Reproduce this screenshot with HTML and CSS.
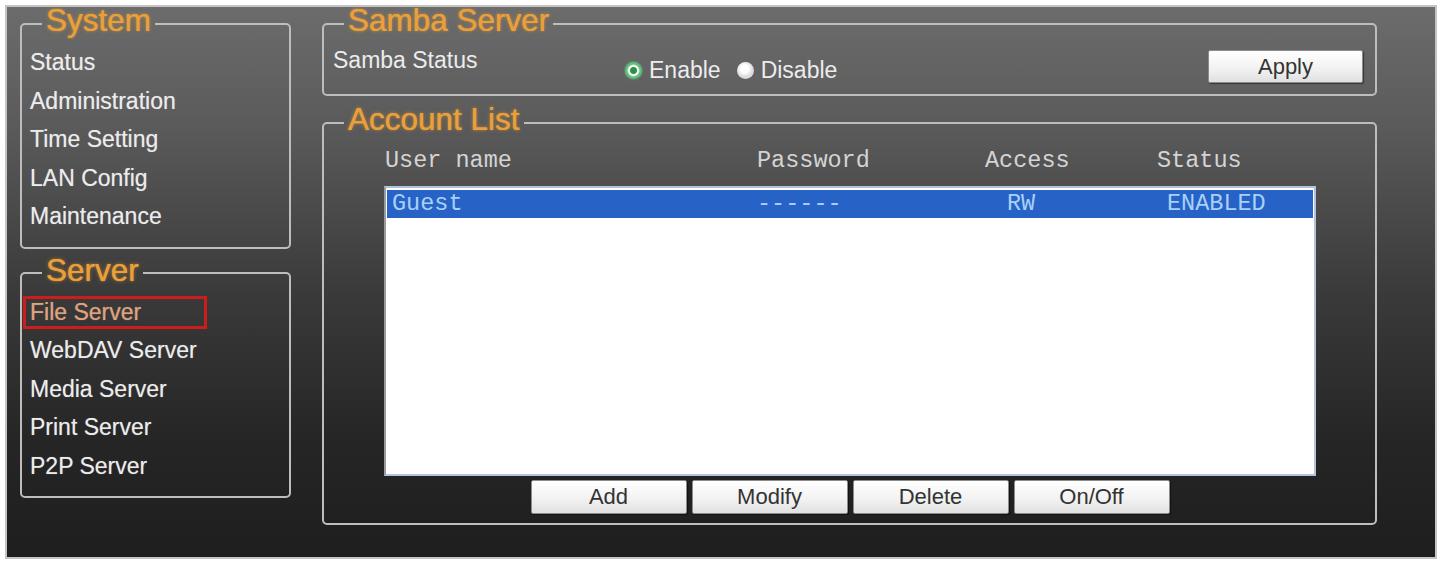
FILE: index.html
```html
<!DOCTYPE html>
<html lang="en">
<head>
    <meta charset="UTF-8">
    <title>File Server</title>
    <link rel="stylesheet" href="styles.css">
</head>
<body>
<div class="frame">
    <div class="sidebar">
        <fieldset class="group">
            <legend>System</legend>
            <a href="#">Status</a>
            <a href="#">Administration</a>
            <a href="#">Time Setting</a>
            <a href="#">LAN Config</a>
            <a href="#">Maintenance</a>
        </fieldset>
        <fieldset class="group server">
            <legend>Server</legend>
            <a href="#" class="active">File Server</a>
            <a href="#">WebDAV Server</a>
            <a href="#">Media Server</a>
            <a href="#">Print Server</a>
            <a href="#">P2P Server</a>
        </fieldset>
    </div>

    <div class="main">
        <fieldset class="samba">
            <legend>Samba Server</legend>
            <span class="samba-label">Samba Status</span>
            <div class="radios">
                <span class="radio checked"></span><span class="radio-text">Enable</span>
                <span class="radio off"></span><span class="radio-text">Disable</span>
            </div>
            <button class="btn apply">Apply</button>
        </fieldset>

        <fieldset class="accounts">
            <legend>Account List</legend>
            <div class="list-wrap">
                <div class="list-head">
                    <span>User name</span>
                    <span>Password</span>
                    <span>Access</span>
                    <span>Status</span>
                </div>
                <div class="list-box">
                    <div class="list-row selected">
                        <span>Guest</span>
                        <span>------</span>
                        <span>RW</span>
                        <span>ENABLED</span>
                    </div>
                </div>
                <div class="actions">
                    <button class="btn">Add</button>
                    <button class="btn">Modify</button>
                    <button class="btn">Delete</button>
                    <button class="btn">On/Off</button>
                </div>
            </div>
        </fieldset>
    </div>
</div>
</body>
</html>
```

FILE: styles.css
```css
html, body {
    margin: 0;
    padding: 0;
    background: #ffffff;
    overflow: hidden;
}

body {
    font-family: "Liberation Sans", Arial, sans-serif;
}

.frame {
    margin: 5px;
    height: 554px;
    box-sizing: border-box;
    border: 2px solid #c4c4c4;
    background: linear-gradient(#6c6c6c 0%, #5a5a5a 22%, #3a3a3a 52%, #262626 78%, #1e1e1e 100%);
    display: flex;
    gap: 31px;
    padding-left: 13px;
}

/* fieldsets */
fieldset {
    margin: 0;
    border: 2px solid #bdbdbd;
    border-radius: 5px;
    min-width: 0;
}

legend {
    font-size: 31.5px;
    line-height: 26px;
    padding: 0 4px 7px 4px;
    color: #eaa03a;
    text-shadow: 0 0 1px #eaa03a, 0 0 4px rgba(236, 160, 50, 0.5);
}

/* sidebar */
.sidebar {
    width: 271px;
    flex-shrink: 0;
}

.group {
    padding: 3px 8px 11px 8px;
}

.group legend {
    margin-left: 12px;
}

.server {
    margin-top: 8px;
}

.group a {
    display: block;
    color: #ececec;
    text-decoration: none;
    font-size: 23px;
    line-height: 38.5px;
    text-shadow: 0 0 1px rgba(255, 255, 255, 0.4);
}

.group a.active {
    position: relative;
    color: #e2a177;
}

.group a.active::after {
    content: '';
    position: absolute;
    left: -7px;
    top: 3px;
    width: 184px;
    height: 33px;
    box-sizing: border-box;
    border: 3px solid #cc1c1c;
}

/* main column */
.main {
    width: 1055px;
    flex-shrink: 0;
}

.samba {
    display: flex;
    align-items: flex-start;
    padding: 0 12px 11px 9px;
}

.samba legend {
    margin-left: 11px;
}

.samba-label {
    width: 292px;
    margin-top: 7px;
    font-size: 23px;
    line-height: 26px;
    color: #ececec;
}

.radios {
    margin-top: 17px;
    display: flex;
    align-items: center;
    height: 26px;
    font-size: 23px;
    color: #ececec;
}

.radio {
    width: 17px;
    height: 17px;
    border-radius: 50%;
    box-sizing: border-box;
    margin-right: 7px;
}

.radio.checked {
    background: radial-gradient(circle, #2f8f4e 0 3px, #f4fbf5 4px 5px, #5fbf7a 6.5px);
    box-shadow: 0 0 2px #6fd08a;
}

.radio.off {
    margin-left: 16px;
    background: radial-gradient(circle at 45% 40%, #ffffff 0 4px, #dcdcdc 8px);
}

.radio-text {
    line-height: 26px;
}

.btn {
    font-family: "Liberation Sans", Arial, sans-serif;
    font-size: 22px;
    color: #333333;
    background: linear-gradient(#ffffff, #f1f1f1 60%, #e0e0e0);
    border: 1px solid #8c8c8c;
    border-radius: 2px;
    box-shadow: 1px 1px 1px rgba(0, 0, 0, 0.45);
    padding: 0;
    cursor: pointer;
}

.apply {
    margin-left: auto;
    margin-top: 10px;
    width: 155px;
    height: 33px;
}

/* account list */
.accounts {
    margin-top: 10px;
    padding: 8px 12px 9px 9px;
}

.accounts legend {
    margin-left: 11px;
}

.list-wrap {
    margin-left: 51px;
    width: 932px;
}

.list-head {
    display: grid;
    grid-template-columns: 372px 228px 172px auto;
    padding-left: 1px;
    font-family: "Liberation Mono", "Courier New", monospace;
    font-size: 23.5px;
    line-height: 28px;
    color: #d4d4d4;
}

.list-box {
    margin-top: 11px;
    height: 290px;
    box-sizing: border-box;
    background: #ffffff;
    border: 2px solid #b3c3dc;
    border-left-color: #9a9a9a;
    padding: 2px 1px;
}

.list-row {
    display: grid;
    grid-template-columns: 365px 250px 160px auto;
    padding-left: 5px;
    height: 28px;
    font-family: "Liberation Mono", "Courier New", monospace;
    font-size: 23.5px;
    line-height: 28px;
    color: #222222;
}

.list-row.selected {
    background: #2762c6;
    color: #a9d0f7;
}

.actions {
    margin-top: 4px;
    display: flex;
    justify-content: center;
    gap: 5px;
}

.actions .btn {
    width: 156px;
    height: 34px;
}
```
